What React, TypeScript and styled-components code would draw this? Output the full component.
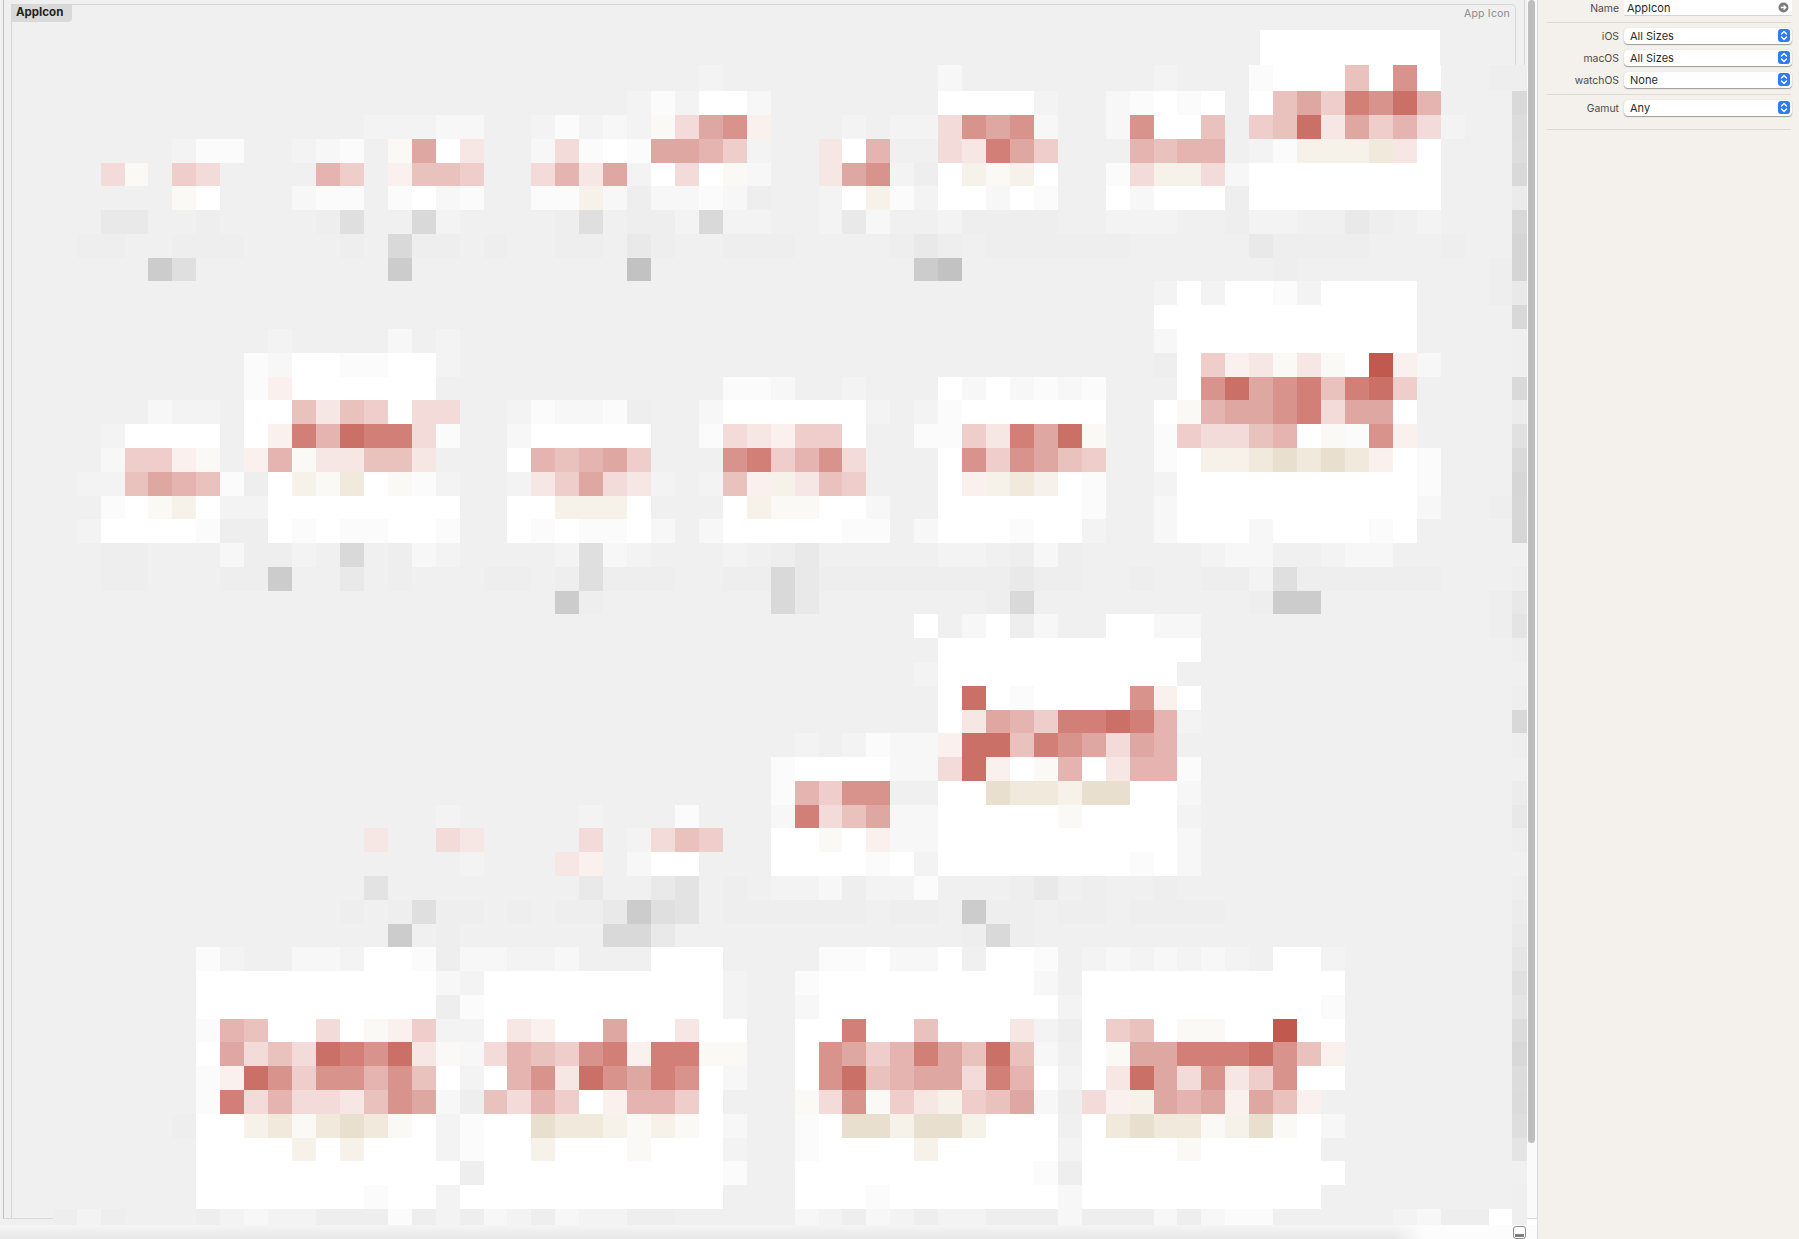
import styled, { createGlobalStyle } from "styled-components";

const GlobalStyle = createGlobalStyle`
  html, body {
    margin: 0;
    height: 100%;
    overflow: hidden;
    background: #f4f1ec;
    font-family: Inter, "Liberation Sans", sans-serif;
  }
  #root { height: 100%; }
`;

// colour of each cell letter in the pixelated preview
const PALETTE: Record<string, string> = {
  "-": "#eeeeee", ",": "#f3f3f3", ":": "#f7f7f7", ";": "#fbfbfb", w: "#ffffff",
  a: "#e9e9e9", f: "#e3e3e3", b: "#dfdfdf", c: "#d9d9d9", d: "#cccccc", e: "#c2c2c2",
  "1": "#faf1ef", "2": "#f6e6e4", "3": "#f2dbd9", "4": "#eecdca", "5": "#e9c1bd",
  "6": "#e5b4b0", "7": "#dfa7a2", "8": "#d8938c", "9": "#d17f77", "0": "#cb7067", "!": "#c05a4e",
  x: "#fbf9f5", y: "#f6f1e9", z: "#f0e9dc", q: "#e8dfce",
};

// one line per mosaic row starting at row 2, "column|cells" runs
const CELLS: string[] = [
  "29|, 39|: 48|, 52|;www5w8w 62|-",
  "26|,;,ww: 39|wwww, 46|:;w;w 52|w5749806",
  "15|,,,:: 22|,;,:,x3781 35|,.,,3878: 46|:8ww5 52|45027463,",
  "7|,;; 12|,:; 16|x7w2 22|:3;w;7764, 34|2w6..32974 47|6566 52|,;yyyz2w",
  "4|3x 7|43 13|64 16|1554 22|3627,w3wx: 34|278,-wyxyw 46|;3yy3:wwwwwwww",
  "7|xw 12|:;;.;w:; 22|;;y:-::;:- 34|,wy;,ww:w; 46|w:www-wwwwwwww",
  "4|aa 8|- 13|-b 17|c, 23|-b.--,c,, 34|,a:..,---- 46|,,, 51|-,,..a-.,",
  "3|--..--- 14|- 16|c--.- 23|--.a- 30|--- 37|-a- 41|---- 45|-- 52|a---- 60|-",
  "6|db 16|d 26|e 38|de 53|- 62|-",
  "48|,w,ww;,wwww 62|-",
  "48|wwwwwwwwwww",
  "11|,....:., 48|:wwwwwwwwww",
  "10|;:ww;;ww, 48|-w412x2xw!1:",
  "10|;1wwwwww 30|;;:.., 39|w:w:;:; 49|w807895904",
  "6|:,, 10|ww5254w33 21|,;::;- 29|:wwwwww, 38|,;wwwwww 48|wx67789377w",
  "4|,wwww 10|w1960993; 21|:wwwww 29|;32144w 38|;;42970x 48|;43356wx;81",
  "4|:441x 10|16x22552 21|w65674 30|894683 39|w848754 48|;wyyzqzqz1w;",
  "3|,,5765;-wyxzwx;, 21|,24732, 29|,51y254 39|w1yzyw; 48|,wwwwwwwwww;",
  "4|;wxyw,,wwwwwwww 21|wwyyyw 30|wyxxww: 39|wwwwww; 48|:wwwwwwwwww: 62|-",
  "3|,wwww;--w;w;;ww; 21|w;w;;w: 29|:wwwww;; 38|:www;ww, 48|:www:wwww;w",
  "4|-- 9|:--,.c.-:, 23|,b:, 30|,.-a 39|,,.-:- 50|,::..,::",
  "4|--...--d..a.- 20|-- 23|-b--- 30|--ca--------a-- 47|- 50|--,b------",
  "23|d- 32|ca 41|-c 52|-dd 62|-",
  "38|w.:w-:..ww:: 62|-",
  "39|wwwwwwwwwww",
  "38|,wwwwwwwwww",
  "39|w0w;wwww81w",
  "39|w276499096,",
  "33|,.,;::1005987376",
  "32|;wwww::301wx6w266;",
  "32|;6488..wwqzzyqqww:",
  "18|, 24|, 28|;...:9357::wwwwwxwwww,",
  "15|2 18|32 24|3.,354 32|wwxw1::wwwwwwwwww:",
  "19|, 23|21.:ww 32|wwww;w,wwwwwwww;w:",
  "15|f 24|a..af 30|-.,,:-,,;...-a.-..-",
  "14|-.-b--.- 23|--adbf.------.--.d--.--.----",
  "16|d.- 25|cca 40|-c-",
  "8|;,..::,ww;-::,,:...www 34|;;w::w.ww;.,:,:,:,.ww,",
  "8|wwwwwwwwww:,wwwwwwwwww, 33|;wwwwwwwww: 45|wwwwwwwwwww",
  "8|wwwwwwwwww-;wwwwwwwwww, 33|:wwwwwwwwww, 45|wwwwwwwwww;",
  "8|;65ww3wx14,,w21ww7ww2ww 33|ww9ww5www2,- 45|w45wxxww!ww",
  "8|w735309802x:365489199xx 33|w874697505: 45|wx779990851",
  "8|;108488685w,w68208798w: 33|w805677396w,w20738248ww",
  "8|;936332587:-5364w1664w 33|x38x42y457:-31y7671751",
  "7|-wwyzxzqzxw,;wwqzzyxyxw: 33|;wqqyqqywww.wzqzzxyqxw:",
  "8|wwwwywywww,;wwywwwxwww, 33|;wwwwywwwww,wwwwxwwwww",
  "8|wwwwwwwwwww-wwwwwwwwww; 33|wwwwwwwwww;- 45|wwwwwwwwwww",
  "8|wwwwwww;ww,wwwwwwwwwww 33|www;wwwwwww: 45|wwwwwwwwww",
  "2|-,-...-,:,,---;-,-:,-:,,-- 33|:,-:,-,,---:---:-:;; 58|,:--w",
];

// the last column is a grey strip, one value per row
const STRIP = [
  "ee", "d9", "dc", "dd", "d9", "eb", "d8", "d5", "d5", "e9", "d8", "ef", "ef", "d9", "ec", "e1", "da",
  "d6", "d7", "d6", "f0", "ee", "e8", "e4", "ee", "f0", "ee", "d8", "ee", "f0", "ec", "e8", "ee", "f0",
  "ee", "ec", "ea", "e6", "e0", "e4", "dc", "d8", "dc", "db", "de", "e4", "f0", "ef", "ef",
];

const colX = (c: number) => Math.round(4.9 + 23.93 * c);
const rowY = (r: number) => (r === 2 ? 65 : Math.round(19.9 + 23.78 * r));

function Mosaic() {
  const rects: React.ReactNode[] = [];
  CELLS.forEach((line, i) => {
    const r = i + 2;
    const y = rowY(r);
    const h = rowY(r + 1) - y;
    line.split(" ").forEach((run) => {
      const at = run.indexOf("|");
      const start = Number(run.slice(0, at));
      [...run.slice(at + 1)].forEach((ch, k) => {
        if (ch === ".") return;
        const x = colX(start + k);
        rects.push(<rect key={`${r}-${start + k}`} x={x} y={y} width={colX(start + k + 1) - x} height={h} fill={PALETTE[ch]} />);
      });
    });
    const g = STRIP[i];
    rects.push(<rect key={`${r}-strip`} x={colX(63)} y={y} width={15} height={h} fill={`#${g}${g}${g}`} />);
  });
  return (
    <MosaicSvg width={1527} height={1225} shapeRendering="crispEdges">
      <rect x={1260} y={30} width={180} height={35} fill="#ffffff" />
      <rect x={colX(2)} y={rowY(50)} width={1480} height={16} fill="#f0f0f0" />
      {rects}
    </MosaicSvg>
  );
}

function SelectField({ label, value }: { label: string; value: string }) {
  return (
    <FieldRow>
      <FieldLabel>{label}</FieldLabel>
      <Select>
        {value}
        <Stepper>
          <svg width="8" height="11" viewBox="0 0 8 11" fill="none" stroke="#fff" strokeWidth="1.4" strokeLinecap="round" strokeLinejoin="round">
            <path d="M1.5 4 L4 1.5 L6.5 4" />
            <path d="M1.5 7 L4 9.5 L6.5 7" />
          </svg>
        </Stepper>
      </Select>
    </FieldRow>
  );
}

export default function App() {
  return (
    <>
      <GlobalStyle />
      <Page>
        <Editor>
          <EditorBody>
            <Canvas>
              <OuterFrame>
                <SetBox>
                  <SetTab>AppIcon</SetTab>
                  <SetKind>App Icon</SetKind>
                </SetBox>
              </OuterFrame>
              <Mosaic />
            </Canvas>
            <ScrollColumn>
              <ScrollTrack>
                <ScrollThumb />
              </ScrollTrack>
              <ScrollCorner />
            </ScrollColumn>
          </EditorBody>
          <StatusBar>
            <ToggleButton />
          </StatusBar>
        </Editor>
        <Inspector>
          <FieldRow>
            <FieldLabel>Name</FieldLabel>
            <NameInput>
              AppIcon
              <svg width="11" height="11" viewBox="0 0 11 11">
                <circle cx="5.5" cy="5.5" r="5" fill="#7b7b7b" />
                <path d="M2.8 5.5 H7.6 M5.6 3.4 L7.8 5.5 L5.6 7.6" fill="none" stroke="#fff" strokeWidth="1.3" />
              </svg>
            </NameInput>
          </FieldRow>
          <Separator />
          <FieldGroup>
            <SelectField label="iOS" value="All Sizes" />
            <SelectField label="macOS" value="All Sizes" />
            <SelectField label="watchOS" value="None" />
          </FieldGroup>
          <Separator />
          <SelectField label="Gamut" value="Any" />
          <LastSeparator />
        </Inspector>
      </Page>
    </>
  );
}

const Page = styled.div`
  display: flex;
  width: 1799px;
  height: 1239px;
  overflow: hidden;
`;

const Editor = styled.div`
  width: 1538px;
  display: flex;
  flex-direction: column;
`;

const EditorBody = styled.div`
  display: flex;
  height: 1225px;
`;

const Canvas = styled.div`
  position: relative;
  width: 1527px;
  overflow: hidden;
  background: #f0f0f0;
`;

const OuterFrame = styled.div`
  position: absolute;
  top: 0;
  left: 3px;
  width: 1522px;
  height: 1219px;
  box-sizing: border-box;
  padding: 4px 8px 0 7px;
  display: flex;
  border-left: 1px solid #c0c0c0;
  border-right: 1px solid #dadada;
  border-bottom: 1px solid #dadada;
`;

const SetBox = styled.div`
  flex: 1;
  display: flex;
  justify-content: space-between;
  align-items: flex-start;
  border: 1px solid #d6d6d6;
  border-bottom: none;
  border-radius: 0 5px 0 0;
`;

const SetTab = styled.div`
  background: #d9d9d9;
  border-radius: 0 0 4px 0;
  padding: 0 4px;
  height: 17px;
  width: 52px;
  line-height: 14px;
  font-size: 11.5px;
  font-weight: 700;
  color: #222;
`;

const SetKind = styled.div`
  margin: 2px 5px 0 0;
  font-size: 10.5px;
  line-height: 14px;
  letter-spacing: 0.2px;
  color: #8a8a8a;
`;

const MosaicSvg = styled.svg`
  position: absolute;
  top: 0;
  left: 0;
`;

const ScrollColumn = styled.div`
  width: 11px;
  display: flex;
  flex-direction: column;
`;

const ScrollTrack = styled.div`
  flex: 1;
  background: #fafafa;
  border-right: 1px solid #d8d8d8;
  border-bottom: 1px solid #dcdcdc;
`;

const ScrollThumb = styled.div`
  width: 7px;
  margin-left: 1px;
  height: 1143px;
  background: #bebebe;
  border-radius: 4px;
`;

const ScrollCorner = styled.div`
  height: 6px;
  background: #ffffff;
  border-right: 1px solid #d8d8d8;
`;

const StatusBar = styled.div`
  height: 14px;
  display: flex;
  justify-content: flex-end;
  align-items: flex-end;
  padding-right: 11px;
  box-sizing: border-box;
  border-right: 1px solid #d8d8d8;
  background: linear-gradient(to right, rgba(255, 255, 255, 0) 1392px, #fcfcfc 1425px),
    linear-gradient(to bottom, #f5f5f5, #e7e7e7);
`;

const ToggleButton = styled.div`
  position: relative;
  width: 13px;
  height: 13px;
  box-sizing: border-box;
  border: 1px solid #8c8c8c;
  border-radius: 3px;
  background: #fff;

  &::after {
    content: "";
    position: absolute;
    left: 1px;
    right: 1px;
    bottom: 1px;
    height: 3px;
    background: #808080;
  }
`;

const Inspector = styled.aside`
  flex: 1;
  background: #f4f1ec;
  color: #2a2a2a;
  font-size: 11px;
`;

const FieldGroup = styled.div`
  display: flex;
  flex-direction: column;
  gap: 6px;
`;

const FieldRow = styled.div`
  display: grid;
  grid-template-columns: 81px 168px;
  column-gap: 5px;
  align-items: center;
  height: 16px;
`;

const FieldLabel = styled.div`
  text-align: right;
  font-size: 10.4px;
  color: #4a4a4a;
`;

const NameInput = styled.div`
  display: flex;
  align-items: center;
  justify-content: space-between;
  height: 16px;
  padding: 0 3px;
  box-sizing: border-box;
  background: #ffffff;
  border-bottom: 1px solid #d4d4d4;
`;

const Select = styled.div`
  position: relative;
  height: 16px;
  line-height: 16px;
  padding-left: 6px;
  background: #ffffff;
  border-radius: 4px;
  box-shadow: 0 1px 1px rgba(0, 0, 0, 0.35), 0 0 1px rgba(0, 0, 0, 0.18);
`;

const Stepper = styled.span`
  position: absolute;
  top: 1px;
  right: 2px;
  width: 12px;
  height: 13px;
  display: flex;
  align-items: center;
  justify-content: center;
  background: #2f7bf3;
  border-radius: 3px;
`;

const Separator = styled.div`
  height: 1px;
  margin: 6px 8px 5px 9px;
  background: #dcd9d3;
`;

const LastSeparator = styled(Separator)`
  margin-top: 13px;
`;
